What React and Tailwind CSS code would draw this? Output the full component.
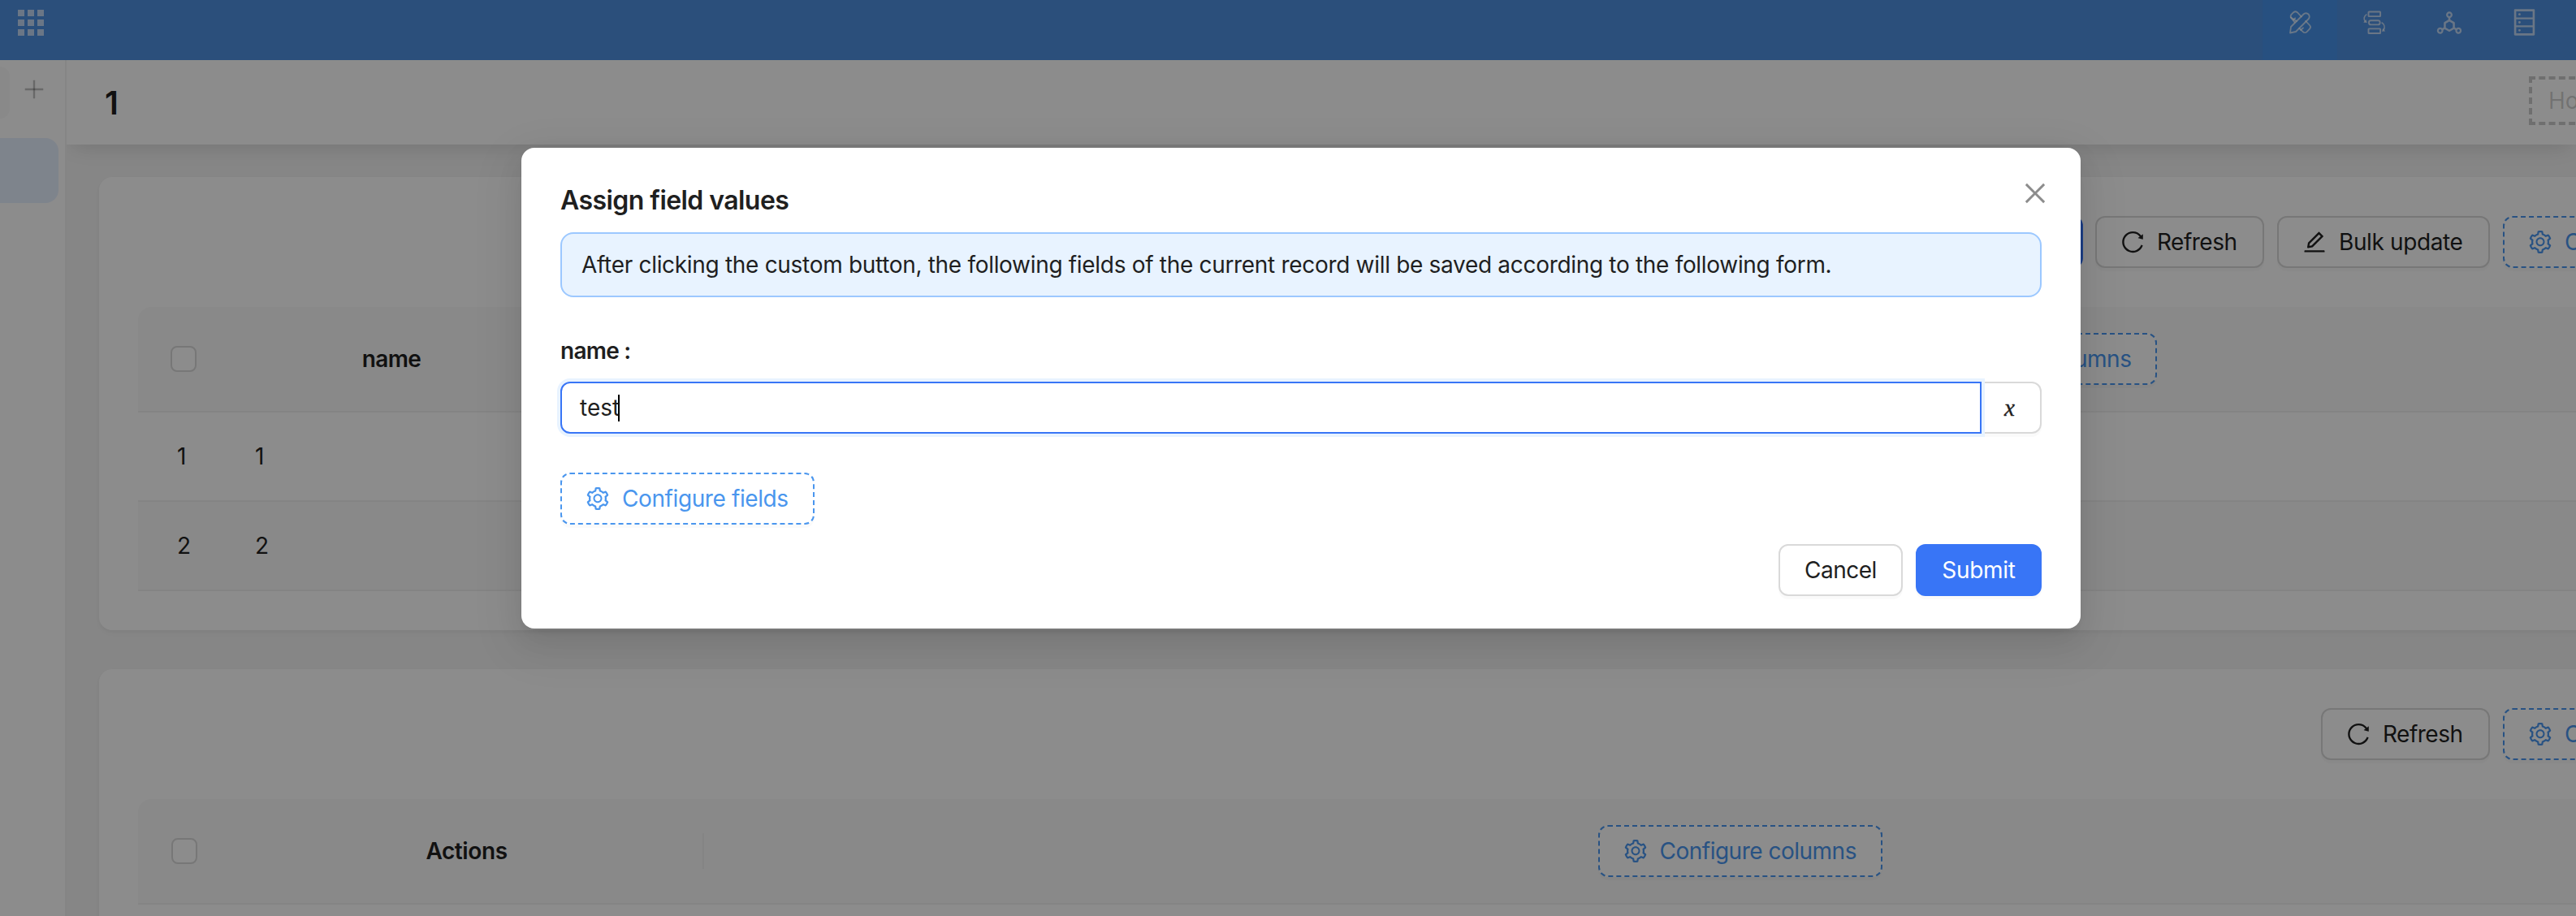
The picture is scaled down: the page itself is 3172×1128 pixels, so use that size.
import {
  AiOutlineClose,
  AiOutlineDatabase,
  AiOutlineDeploymentUnit,
  AiOutlineEdit,
  AiOutlinePlus,
  AiOutlineReload,
  AiOutlineSetting,
} from "react-icons/ai";

function DesignIcon() {
  return (
    <svg width="30" height="30" viewBox="0 0 30 30" fill="none" stroke="currentColor" strokeWidth="1.8" strokeLinejoin="round" strokeLinecap="round">
      <path d="M3 27.5 4 20 19.5 4.5a4.2 4.2 0 0 1 6 6L10 26z" />
      <path d="M11 13 4.2 8.8a3.6 3.6 0 0 1 0-3.6L7.2 2.2a3.6 3.6 0 0 1 4.6 0L16.8 7.5" />
      <path d="M3.8 8.4 8.8 14.6M22.2 13l4.8 5a3.4 3.4 0 0 1 0 4.6l-3.4 3.6a3.4 3.4 0 0 1-4.8 0l-4.6-4.4" />
      <path d="M7 11.5 9.2 9.4M16 24l3-2.6" />
    </svg>
  );
}

function FlowIcon() {
  return (
    <svg width="30" height="30" viewBox="0 0 30 30" fill="none" stroke="currentColor" strokeWidth="1.9">
      <rect x="7.5" y="1.500" width="14.600" height="5.600" rx=".6" />
      <rect x="8" y="12.200" width="13.600" height="5.200" rx="2.400" />
      <rect x="7.5" y="22.400" width="14.600" height="5.600" rx=".6" />
      <path d="M5.400 4.600C1.800 6.600 1.200 10.600 3.400 13.600M23.600 14.800c3.600 2 4.400 6 2.400 9.600" strokeWidth="1.6" />
      <path d="M1.200 14.800 5.800 14.900 4.400 11zM24 25.800l4.200-.4-3-3.400z" fill="currentColor" stroke="none" />
    </svg>
  );
}

function Button({ Icon, className, children }) {
  return (
    <div className={"flex h-16 shrink-0 items-center gap-[14px] whitespace-nowrap rounded-xl border-2 px-7 shadow-[0_4px_0_rgba(0,0,0,0.02)] " + className}>
      {Icon && <Icon size={32} className="shrink-0" />}
      <span>{children}</span>
    </div>
  );
}

function DashedButton({ className, children }) {
  return (
    <Button Icon={AiOutlineSetting} className={"border-dashed border-[#4a96ee] bg-white text-[#4a96ee] " + className}>
      {children}
    </Button>
  );
}

function RefreshButton() {
  return (
    <Button Icon={AiOutlineReload} className="w-[208px] border-[#d9d9d9] bg-white tracking-[-0.5px]">
      Refresh
    </Button>
  );
}

function Checkbox() {
  return <div className="size-8 rounded-lg border-2 border-[#d9d9d9] bg-white" />;
}

function Card({ className, children }) {
  return (
    <section className={"w-[3344px] rounded-2xl bg-white p-12 shadow-[0_2px_4px_rgba(0,0,0,0.03),0_2px_12px_-2px_rgba(0,0,0,0.02),0_4px_8px_rgba(0,0,0,0.02)] " + className}>
      {children}
    </section>
  );
}

function Row({ n, striped }) {
  return (
    <div className={"flex h-[110px] items-center border-b-2 border-[#f0f0f0] " + (striped ? "bg-[#fafafa]" : "")}>
      <span className="w-[96px] pl-12">{n}</span>
      <span className="pl-12">{n}</span>
    </div>
  );
}

function Header() {
  return (
    <header className="flex h-[74px] shrink-0 justify-between bg-[#4f90e0] text-white/65">
      <div className="ml-[22px] mt-3 grid h-8 w-8 grid-cols-3 gap-1">
        {[0, 1, 2, 3, 4, 5, 6, 7, 8].map((i) => (
          <span key={i} className="h-2 w-2 bg-white/65" />
        ))}
      </div>
      <nav className="mr-[18px] flex">
        <div className="flex w-[92px] justify-center bg-[#4793ea] pt-[13px]"><DesignIcon /></div>
        <div className="flex w-[92px] justify-center pt-[13px]"><FlowIcon /></div>
        <div className="flex w-[92px] justify-center pt-[10px]"><AiOutlineDeploymentUnit size={36} /></div>
        <div className="flex w-[92px] justify-center pt-[9px]"><AiOutlineDatabase size={37} /></div>
      </nav>
    </header>
  );
}

function Sidebar() {
  return (
    <aside className="relative z-10 flex w-[82px] shrink-0 flex-col border-r-2 border-[#f2f2f2] bg-white pt-2">
      <div className="flex h-16">
        <div className="w-3 rounded-r-2xl bg-[#fafafa]" />
        <AiOutlinePlus size={32} className="ml-[14px] mt-3 text-black/25" />
      </div>
      <div className="mt-6 h-20 w-[72px] rounded-r-2xl bg-[#e6f0ff]" />
    </aside>
  );
}

function Modal() {
  return (
    <div className="absolute inset-0 z-20 flex items-start bg-black/45 pl-[642px] pt-[182px]">
      <div className="flex h-[592px] w-[1920px] flex-col rounded-2xl bg-white px-12 pt-10 shadow-[0_12px_32px_0_rgba(0,0,0,0.08),0_6px_12px_-8px_rgba(0,0,0,0.12),0_18px_56px_16px_rgba(0,0,0,0.05)]">
        <div className="flex h-12 justify-between">
          <h2 className="pt-px text-[32px] font-semibold leading-[48px] tracking-[-0.56px]">Assign field values</h2>
          <AiOutlineClose size={36} className="-mr-[10px] -mt-[2px] text-black/45" />
        </div>
        <div className="mt-4 flex h-20 shrink-0 items-center rounded-2xl border-2 border-[#9cc8ff] bg-[#e8f3ff] px-6 tracking-[-0.31px]">
          After clicking the custom button, the following fields of the current record will be saved according to the following form.
        </div>
        <div className="mt-11 flex h-11 items-center font-semibold tracking-[-0.7px]">
          name<span className="ml-[6px]">:</span>
        </div>
        <div className="mt-4 flex h-16 shrink-0">
          <div className="relative z-10 flex w-[1750px] items-center rounded-l-xl border-2 border-[#3875f6] pl-[22px] shadow-[0_0_0_4px_#e8f3ff]">
            test<span className="-ml-[2px] h-[33px] w-[2px] bg-black" />
          </div>
          <div className="flex w-[74px] items-center justify-center rounded-r-xl border-2 border-l-0 border-[#d9d9d9] pr-[3px] font-['Liberation_Serif',serif] text-[29px] italic shadow-[0_4px_0_rgba(0,0,0,0.02)] [-webkit-text-stroke:0.4px_#1f1f1f]">
            x
          </div>
        </div>
        <div className="mt-12 flex">
          <DashedButton className="w-[313px] tracking-[-0.4px]">Configure fields</DashedButton>
        </div>
        <div className="mt-6 flex justify-end gap-4">
          <Button className="w-[153px] justify-center border-[#d9d9d9] bg-white tracking-[-0.5px]">Cancel</Button>
          <Button className="w-[155px] justify-center border-[#3875f6] bg-[#3875f6] tracking-[-0.3px] text-white shadow-[0_4px_0_#e8f3ff]">Submit</Button>
        </div>
      </div>
    </div>
  );
}

export default function App() {
  return (
    <div className="relative flex h-[1128px] w-[3172px] flex-col overflow-hidden bg-[#f4f4f4] font-['Inter',sans-serif] text-[28px] leading-[44px] text-[#1f1f1f]">
      <Header />
      <div className="flex min-h-0 flex-1">
        <Sidebar />
        <main className="flex min-w-0 flex-1 flex-col overflow-hidden">
          <div className="flex h-[104px] shrink-0 items-center justify-between bg-white pl-12 shadow-[0_10px_24px_-8px_rgba(0,0,0,0.14)]">
            <h1 className="-ml-px pt-px text-[40px] font-semibold">1</h1>
            <div className="mb-1 flex h-[60px] w-[58px] items-center overflow-hidden">
              <div className="flex h-[60px] w-[180px] shrink-0 items-center border-4 border-dashed border-black/20 pl-5 text-black/20">Ho</div>
            </div>
          </div>
          <div className="flex flex-col gap-12 pl-10 pt-10">
            <Card className="h-[558px]">
              <div className="flex justify-end gap-4">
                <div className="-mr-px h-16 w-[180px] rounded-xl bg-[#3875f6]" />
                <RefreshButton />
                <Button Icon={AiOutlineEdit} className="w-[262px] border-[#d9d9d9] bg-white tracking-[-0.38px]">
                  Bulk update
                </Button>
                <DashedButton className="w-[336px]">C</DashedButton>
              </div>
              <div className="mt-12 flex h-[130px] items-center rounded-t-2xl border-b-2 border-[#f0f0f0] bg-[#fafafa]">
                <div className="flex w-28 justify-center"><Checkbox /></div>
                <div className="w-[400px] text-center font-semibold tracking-[-0.6px]">name</div>
                <div className="w-[862px]" />
                <div className="flex flex-1 justify-center">
                  <DashedButton className="w-[350px] tracking-[-0.5px]">Configure columns</DashedButton>
                </div>
              </div>
              <Row n="1" />
              <Row n="2" striped />
            </Card>
            <Card className="h-[500px]">
              <div className="flex justify-end gap-4">
                <RefreshButton />
                <DashedButton className="w-[336px]">C</DashedButton>
              </div>
              <div className="mt-12 flex h-[130px] items-center rounded-t-2xl border-b-2 border-[#f0f0f0] bg-[#fafafa]">
                <div className="flex w-[114px] justify-center"><Checkbox /></div>
                <div className="flex w-[583px] items-center">
                  <span className="flex-1 text-center font-semibold tracking-[-0.4px]">Actions</span>
                  <span className="h-11 w-[2px] bg-[#f0f0f0]" />
                </div>
                <div className="flex flex-1 justify-center">
                  <DashedButton className="w-[350px] tracking-[-0.5px]">Configure columns</DashedButton>
                </div>
              </div>
            </Card>
          </div>
        </main>
      </div>
      <Modal />
    </div>
  );
}
